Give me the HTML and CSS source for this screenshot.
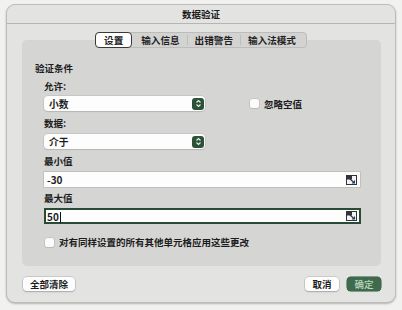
FILE: index.html
```html
<!DOCTYPE html>
<html lang="zh">
<head>
<meta charset="utf-8">
<title>数据验证</title>
<link rel="stylesheet" href="styles.css">
</head>
<body>
<div class="window">
  <div class="titlebar">数据验证</div>
  <div class="tabs-wrap">
    <div class="tabs">
      <span class="tab active">设置</span>
      <span class="tab">输入信息</span>
      <span class="sep"></span>
      <span class="tab">出错警告</span>
      <span class="sep"></span>
      <span class="tab">输入法模式</span>
    </div>
  </div>
  <div class="panel">
    <div class="heading">验证条件</div>
    <div class="label l-allow">允许:</div>
    <div class="row-allow">
      <div class="select">
        <span>小数</span>
        <span class="stepper"><svg width="7" height="9" viewBox="0 0 7 9"><path d="M1.5 3.5 L3.5 1.5 L5.5 3.5 M1.5 5.5 L3.5 7.5 L5.5 5.5" fill="none" stroke="#e8f0ea" stroke-width="1.1"/></svg></span>
      </div>
      <label class="check ignore"><span class="box"></span><span>忽略空值</span></label>
    </div>
    <div class="label l-data">数据:</div>
    <div class="select sel-data">
      <span>介于</span>
      <span class="stepper"><svg width="7" height="9" viewBox="0 0 7 9"><path d="M1.5 3.5 L3.5 1.5 L5.5 3.5 M1.5 5.5 L3.5 7.5 L5.5 5.5" fill="none" stroke="#e8f0ea" stroke-width="1.1"/></svg></span>
    </div>
    <div class="label l-min">最小值</div>
    <div class="input">
      <span>-30</span>
      <svg class="ref" width="11" height="10" viewBox="0 0 11 10"><rect x="0.5" y="0.5" width="10" height="9" fill="#f4f4f4" stroke="#333" stroke-width="1"/><rect x="1" y="1" width="5" height="3.5" fill="#333"/><path d="M4 4 L8.5 8 M8.5 5.5 V8 H6" fill="none" stroke="#1a3d6a" stroke-width="1.1"/></svg>
    </div>
    <div class="label l-max">最大值</div>
    <div class="input focused">
      <span>50<span class="caret"></span></span>
      <svg class="ref" width="11" height="10" viewBox="0 0 11 10"><rect x="0.5" y="0.5" width="10" height="9" fill="#f4f4f4" stroke="#333" stroke-width="1"/><rect x="1" y="1" width="5" height="3.5" fill="#333"/><path d="M4 4 L8.5 8 M8.5 5.5 V8 H6" fill="none" stroke="#1a3d6a" stroke-width="1.1"/></svg>
    </div>
    <label class="check apply"><span class="box"></span><span>对有同样设置的所有其他单元格应用这些更改</span></label>
  </div>
  <div class="footer">
    <button class="btn">全部清除</button>
    <div class="right">
      <button class="btn">取消</button>
      <button class="btn primary">确定</button>
    </div>
  </div>
</div>
</body>
</html>
```
FILE: styles.css
```css
* { box-sizing: border-box; }
html, body { margin: 0; padding: 0; }
body {
  width: 402px;
  height: 310px;
  background: #f1f1f0;
  font-family: "Noto Sans CJK SC", "Noto Sans", sans-serif;
  font-size: 9.5px;
  font-weight: 700;
  color: #1c1c1c;
  overflow: hidden;
  padding: 4px 6px 0 6px;
}
.window {
  width: 390px;
  height: 299px;
  background: #e3e3e2;
  border: 1px solid #bdbdbc;
  border-radius: 9px;
  box-shadow: 0 1px 2px rgba(0,0,0,0.25);
  position: relative;
}
.titlebar {
  height: 19px;
  line-height: 19px;
  text-align: center;
  font-size: 9.5px;
  border-bottom: 1px solid #b5b5b4;
}
.tabs-wrap {
  display: flex;
  justify-content: center;
  position: relative;
  z-index: 2;
  height: 0;
  margin-top: 8px;
}
.tabs {
  display: flex;
  align-items: center;
  height: 16px;
  background: #d3d3d2;
  border: 1px solid #bcbcbb;
  border-radius: 4px;
  padding: 0 3px 0 0;
  white-space: nowrap;
  flex: none;
}
.tab {
  line-height: 14px;
  padding: 0 7px;
  font-size: 9.6px;
  color: #222;
  white-space: nowrap;
  flex: none;
}
.tab.active {
  background: #fff;
  border: 1px solid #3a3a3a;
  border-radius: 4px;
  height: 16px;
  line-height: 14px;
  margin: 0 2px 0 -1px;
  padding: 0 8px;
}
.sep {
  width: 1px;
  height: 10px;
  background: #bdbdbc;
  flex: none;
}
.panel {
  margin: 8px 14px 0 15px;
  height: 226px;
  background: #d5d5d4;
  border-radius: 5px;
  padding: 22px 0 0 13px;
  display: flex;
  flex-direction: column;
  align-items: flex-start;
}
.heading { line-height: 12px; height: 12px; }
.label { line-height: 12px; height: 12px; margin-left: 9px; }
.l-allow { margin-top: 6px; }
.l-data { margin-top: 6px; }
.l-min { margin-top: 6px; }
.l-max { margin-top: 5px; }
.row-allow {
  display: flex;
  align-items: center;
  margin: 4px 0 0 9px;
}
.select {
  width: 161px;
  height: 15px;
  background: #fdfdfd;
  border-radius: 4px;
  box-shadow: 0 0 0 0.5px #b7b7b7, 0 1px 1px rgba(0,0,0,0.15);
  display: flex;
  align-items: center;
  justify-content: space-between;
  padding: 0 1px 0 5px;
  font-size: 9.8px;
}
.sel-data { margin: 5px 0 0 9px; height: 15px; }
.stepper {
  width: 12px;
  height: 12px;
  background: #2b5239;
  border-radius: 3px;
  display: flex;
  align-items: center;
  justify-content: center;
}
.check {
  display: flex;
  align-items: center;
  gap: 5px;
}
.box {
  width: 9px;
  height: 9px;
  background: #fbfbfb;
  border-radius: 2px;
  box-shadow: 0 0 0 0.5px #b5b5b5, 0 1px 1px rgba(0,0,0,0.1);
}
.ignore { margin-left: 45px; }
.input {
  width: 316px;
  height: 15px;
  margin: 5px 0 0 9px;
  background: #fdfdfd;
  box-shadow: 0 0 0 0.5px #a9a9a9;
  display: flex;
  align-items: center;
  justify-content: space-between;
  padding: 0 3px 0 3px;
  font-size: 10px;
}
.input.focused {
  width: 317px;
  height: 16px;
  margin-top: 4px;
  border: 2px solid #284a36;
  box-shadow: none;
  padding: 0 2px 0 1px;
}
.caret {
  display: inline-block;
  width: 1px;
  height: 11px;
  background: #111;
  vertical-align: -2px;
  margin-left: 1px;
}
.ref { display: block; }
.apply { margin: 11px 0 0 10px; }
.footer {
  display: flex;
  justify-content: space-between;
  align-items: center;
  margin: 11px 14px 0 16px;
}
.right { display: flex; gap: 8px; }
.btn {
  font-family: "Noto Sans CJK SC", "Noto Sans", sans-serif;
  font-size: 9.5px;
  font-weight: 700;
  color: #1c1c1c;
  background: #fdfdfd;
  border: none;
  border-radius: 4px;
  box-shadow: 0 0 0 0.5px #b0b0b0, 0 1px 1.5px rgba(0,0,0,0.25);
  height: 14px;
  line-height: 14px;
  padding: 0 7px;
  margin: 0;
}
.right .btn { width: 34px; padding: 0; }
.btn.primary {
  background: #3e6b4c;
  color: #bcd8c2;
  box-shadow: 0 0 0 0.5px #2d5039;
  font-weight: 500;
}
```
